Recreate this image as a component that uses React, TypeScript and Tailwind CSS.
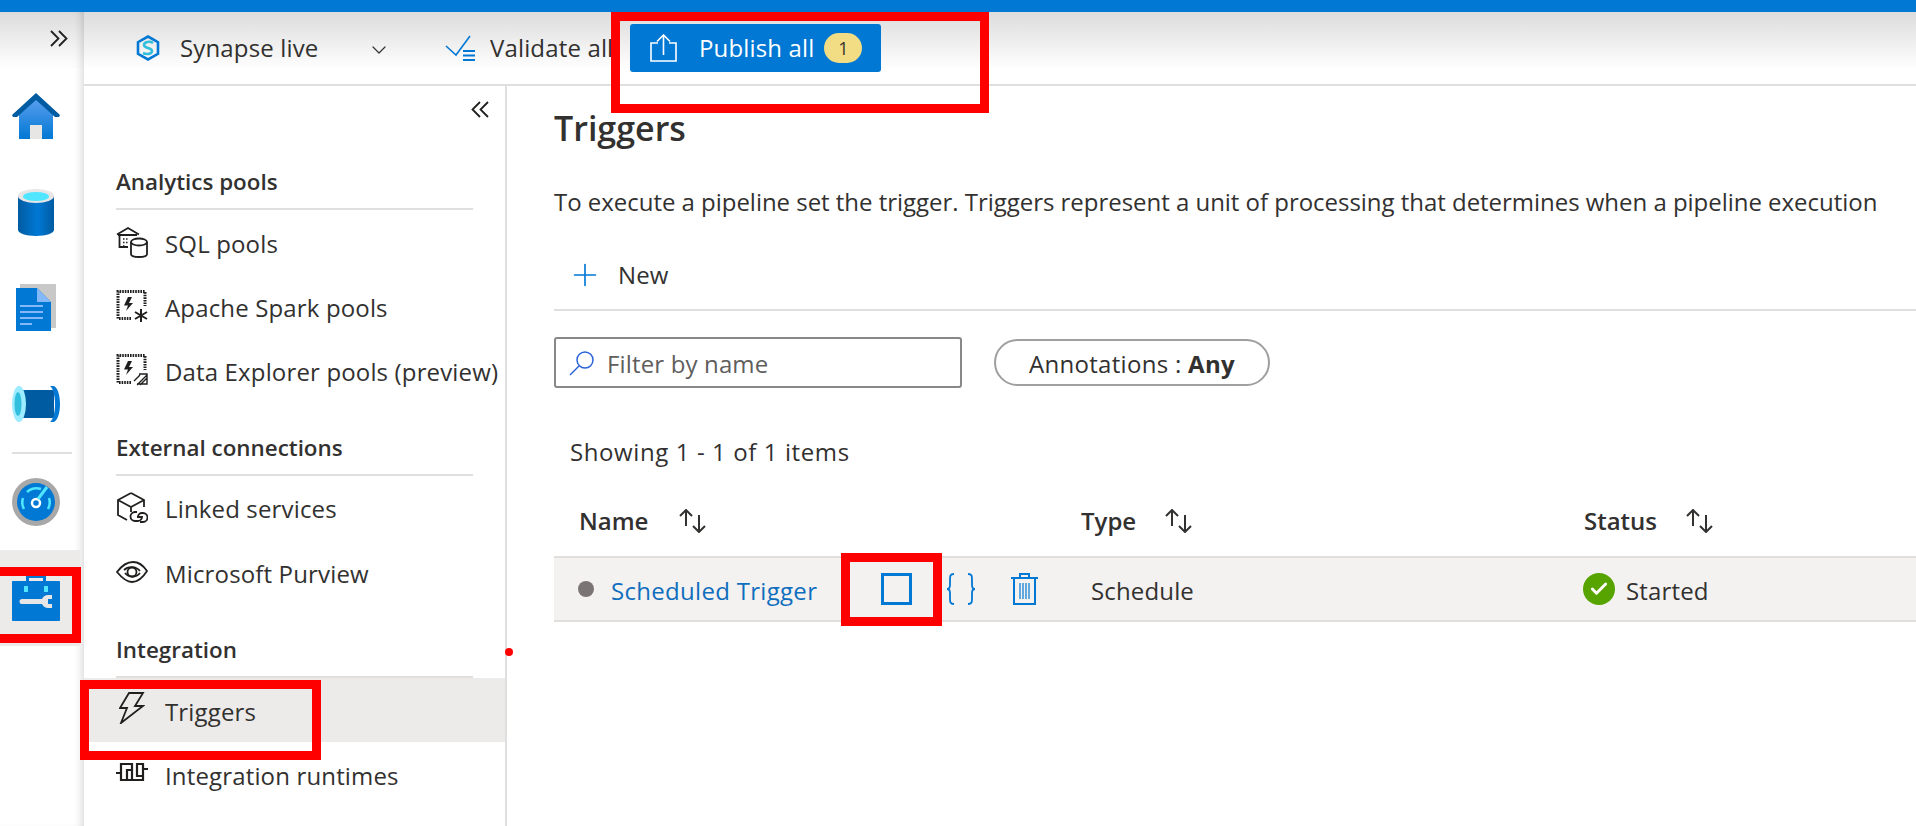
import { Check, ChevronDown, Plus } from 'lucide-react';

const font = { fontFamily: '"Open Sans", "Noto Sans", sans-serif' };

function SortIcon() {
  return (
    <svg width="30" height="24" viewBox="0 0 30 24" fill="none" stroke="#323130" strokeWidth="2">
      <path d="M8 17V1M2 7l6-6 6 6" />
      <path d="M21 6v17M15 17l6 6 6-6" />
    </svg>
  );
}

function HomeIcon() {
  return (
    <svg width="48" height="46" viewBox="0 0 48 46">
      <defs>
        <linearGradient id="home" x1="0" y1="0" x2="0" y2="1">
          <stop offset="0" stopColor="#5ea0ef" />
          <stop offset="1" stopColor="#0078d4" />
        </linearGradient>
      </defs>
      <path d="M7 20L24 4l17 16v26H7z" fill="url(#home)" />
      <path d="M0 22L24 0l24 22-1 2H43L24 7 5 24H1z" fill="#005ba1" />
      <rect x="18" y="32" width="12" height="14" fill="#e8e6e4" />
    </svg>
  );
}

function DatabaseIcon() {
  return (
    <svg width="36" height="48" viewBox="0 0 36 48">
      <defs>
        <linearGradient id="db" x1="0" y1="0" x2="1" y2="0">
          <stop offset="0" stopColor="#005ba1" />
          <stop offset="0.55" stopColor="#0078d4" />
          <stop offset="1" stopColor="#005ba1" />
        </linearGradient>
      </defs>
      <path d="M0 8v34c0 3 8 6 18 6s18-3 18-6V8z" fill="url(#db)" />
      <ellipse cx="18" cy="8" rx="18" ry="7" fill="#e6e6e6" />
      <ellipse cx="18" cy="8.500" rx="13" ry="4.500" fill="#50e6ff" />
    </svg>
  );
}

function DocumentIcon() {
  return (
    <svg width="42" height="48" viewBox="0 0 42 48">
      <path d="M5 0h36v44H5z" fill="#c8c8c8" />
      <path d="M1 4h21l14 14v29H1z" fill="#0078d4" />
      <path d="M22 4l14 14H22z" fill="#83b9f9" />
      <path d="M5 22h23M5 28h23M5 34h23M5 40h12" stroke="#83b9f9" strokeWidth="2" />
    </svg>
  );
}

function PipelineIcon() {
  return (
    <svg width="48" height="36" viewBox="0 0 48 36">
      <rect x="6" y="4" width="36" height="28" fill="#005ba1" />
      <path d="M38 0h3c4 0 7 8 7 18s-3 18-7 18h-3c3-2 5-9 5-18S41 2 38 0z" fill="#0078d4" />
      <ellipse cx="7" cy="18" rx="7" ry="18" fill="#9cebff" />
      <ellipse cx="6" cy="18" rx="3.500" ry="12" fill="#32bedd" />
    </svg>
  );
}

function MonitorIcon() {
  return (
    <svg width="48" height="48" viewBox="0 0 48 48" fill="none">
      <circle cx="24" cy="24" r="24" fill="#a8a8a8" />
      <circle cx="24" cy="24" r="19" fill="#0078d4" />
      <path d="M12 31a14 14 0 0 1-1-11" stroke="#50e6ff" strokeWidth="2.500" />
      <path d="M37 20a14 14 0 0 1-1 11" stroke="#50e6ff" strokeWidth="2.500" />
      <path d="M15 14a14 14 0 0 1 14-3" stroke="#50e6ff" strokeWidth="2.500" />
      <circle cx="24" cy="25" r="4" stroke="#fff" strokeWidth="2.500" />
      <path d="M26 21l9-12" stroke="#50e6ff" strokeWidth="3" />
    </svg>
  );
}

function ToolboxIcon() {
  return (
    <svg width="48" height="48" viewBox="0 0 48 48">
      <path d="M14 7V1h20v6h-3V4H17v3z" fill="#0078d4" />
      <rect x="0" y="7" width="48" height="40" rx="1" fill="#0078d4" />
      <rect x="12" y="12" width="4" height="6" fill="#50e6ff" />
      <rect x="32" y="12" width="4" height="6" fill="#50e6ff" />
      <path d="M10 25h20a7 7 0 0 1 7-4h3v4h-4v5h4v4h-3a7 7 0 0 1-7-4H10a2.500 2.500 0 0 1 0-5z" fill="#e6e6e6" />
    </svg>
  );
}

function SynapseLogo() {
  return (
    <svg width="24" height="26" viewBox="0 0 24 26" fill="none">
      <path d="M12 1.500l10 5.700v11.600l-10 5.700-10-5.700V7.200z" stroke="#0078d4" strokeWidth="2.600" />
      <path d="M17 8c-3-2-9-1.500-9 2s8 2.500 8 6-6 3.500-9 2" stroke="#32bedd" strokeWidth="2.600" />
    </svg>
  );
}

function ValidateIcon() {
  return (
    <svg width="30" height="26" viewBox="0 0 30 26" fill="none" stroke="#0078d4">
      <path d="M1 11l10 9L25 1" strokeWidth="1.600" />
      <path d="M18 16h12M18 20.500h12M18 25h12" strokeWidth="2" />
    </svg>
  );
}

function PublishIcon() {
  return (
    <svg width="27" height="28" viewBox="0 0 27 28" fill="none" stroke="#fff" strokeWidth="1.600">
      <path d="M8 9H1v18h25V9h-7" />
      <path d="M13.500 21V1M7 7.500L13.500 1 20 7.500" />
    </svg>
  );
}

function DoubleChevron({ flip }: { flip?: boolean }) {
  return (
    <svg width="18" height="17" viewBox="0 0 18 17" fill="none" stroke="#201f1e" strokeWidth="1.800" className={flip ? 'rotate-180' : ''}>
      <path d="M1 1l7.500 7.500L1 16M9 1l7.500 7.500L9 16" />
    </svg>
  );
}

function SqlPoolsIcon() {
  return (
    <svg width="32" height="32" viewBox="0 0 32 32" fill="none" stroke="#201f1e" strokeWidth="1.800">
      <path d="M1 8.500L12 2l11 6.500M2 9h19M3.500 9v12H12" />
      <path d="M7 13h5M7 16.500h5M7 20h2" strokeWidth="1.500" strokeDasharray="1.500 1.500" />
      <ellipse cx="23" cy="16" rx="8" ry="3.500" fill="#fff" />
      <path d="M15 16v12c0 2 3.500 3 8 3s8-1 8-3V16" />
    </svg>
  );
}

function PoolChip({ variant }: { variant: 'spark' | 'explorer' }) {
  return (
    <svg width="32" height="32" viewBox="0 0 32 32" fill="none" stroke="#201f1e">
      <path d="M15 28.500H2V1.500h27V16" strokeWidth="3" strokeDasharray="1.600 1" />
      <path d="M12 7l-4 8.500h4L10 21l7-8h-4l3-6z" fill="#201f1e" stroke="none" />
      {variant === 'spark' ? (
        <path d="M25 19v13M19 22l12 7M31 22l-12 7" strokeWidth="2" />
      ) : (
        <path d="M23 20h8v10H21M31 21L21 31M18 27l6-6M24 31l7-7" strokeWidth="1.400" />
      )}
    </svg>
  );
}

function LinkedIcon() {
  return (
    <svg width="32" height="32" viewBox="0 0 32 32" fill="none" stroke="#201f1e" strokeWidth="1.800">
      <path d="M15 1L2 8v15l9 5M15 1l13 7v7M2 8l13 7 13-7M15 15v5" />
      <path d="M21 20h-2a4.500 4.500 0 0 0 0 9h3a4.500 4.500 0 0 0 4-4h-5" />
      <path d="M22 25a4 4 0 0 1 4-4h1a4.500 4.500 0 0 1 0 9h-3" />
    </svg>
  );
}

function PurviewIcon() {
  return (
    <svg width="32" height="22" viewBox="0 0 32 22" fill="none" stroke="#201f1e" strokeWidth="1.800">
      <path d="M1 11C7 3 12 1 17 1c5 0 10 3 14 9-5 8-10 11-15 11S6 17 1 11z" />
      <path d="M8 9c4-4 12-4 16 1M24 12c-4 5-11 5-15 0" />
      <circle cx="16" cy="11" r="4.500" />
    </svg>
  );
}

function BoltIcon() {
  return (
    <svg width="26" height="32" viewBox="0 0 26 32" fill="none" stroke="#201f1e" strokeWidth="1.800">
      <path d="M10 1h14l-8 13h8L2 31l6-15H1z" strokeLinejoin="miter" />
    </svg>
  );
}

function RuntimeIcon() {
  return (
    <svg width="32" height="20" viewBox="0 0 32 20" fill="none" stroke="#201f1e" strokeWidth="2.200">
      <path d="M0 11h5M27 7h5" />
      <path d="M5 18V2h11v16zM11 18V8h6M16 18h11V2h-6v12h6" />
    </svg>
  );
}

function BracesIcon() {
  return (
    <svg width="28" height="32" viewBox="0 0 28 32" fill="none" stroke="#0078d4" strokeWidth="1.800">
      <path d="M7 1C3 1 3 3 3 7v5c0 3-1 4-3 4 2 0 3 1 3 4v5c0 4 0 6 4 6" />
      <path d="M21 1c4 0 4 2 4 6v5c0 3 1 4 3 4-2 0-3 1-3 4v5c0 4 0 6-4 6" />
    </svg>
  );
}

function TrashIcon() {
  return (
    <svg width="27" height="32" viewBox="0 0 27 32" fill="none" stroke="#0078d4" strokeWidth="2">
      <path d="M0 5h27M9 5V1h9v4M3 5v26h21V5" />
      <path d="M9 10v16M12 10v16M15 10v16M18 10v16" strokeWidth="1.200" />
    </svg>
  );
}

function AnnotationBox({ className }: { className: string }) {
  return <div className={`absolute border-[9px] border-[#ff0000] pointer-events-none ${className}`} />;
}

function SectionTitle({ children }: { children: string }) {
  return (
    <div className="mx-8 h-[53px] border-b-2 border-[#e1dfdd] text-[22.400px] font-semibold text-[#323130] leading-[50px]">
      {children}
    </div>
  );
}

function NavItem({ icon, label, active, textClass }: { icon: React.ReactNode; label: string; active?: boolean; textClass?: string }) {
  return (
    <div className={`h-16 flex items-center px-8 ${active ? 'bg-[#edebe9]' : ''}`}>
      <div className="w-8 mr-[17px] flex justify-center items-center -mt-1">{icon}</div>
      <span className={`text-[24px] tracking-[0.15px] text-[#323130] whitespace-nowrap ${textClass ?? ''}`}>{label}</span>
    </div>
  );
}

function RailItem({ children, active }: { children: React.ReactNode; active?: boolean }) {
  return (
    <div className={`h-24 flex items-center justify-center w-[80px] pr-2 ${active ? 'bg-[#edebe9]' : ''}`}>
      {children}
    </div>
  );
}

export default function App() {
  return (
    <div style={font} className="relative w-[1916px] h-[826px] overflow-hidden bg-white text-[#323130]">
      <div className="h-3 bg-[#0078d4]" />
      <div className="flex h-[814px]">
        {/* icon rail */}
        <div className="w-[84px] shrink-0 shadow-[inset_-8px_0_8px_-6px_rgba(0,0,0,0.16)]">
          <div className="h-14 bg-gradient-to-b from-[#dcdcdc] to-white flex justify-end items-start pr-4 pt-[18px] shadow-[inset_-8px_0_8px_-6px_rgba(0,0,0,0.16)]">
            <DoubleChevron />
          </div>
          <RailItem><HomeIcon /></RailItem>
          <RailItem><DatabaseIcon /></RailItem>
          <RailItem><DocumentIcon /></RailItem>
          <RailItem><PipelineIcon /></RailItem>
          <div className="mx-3 h-0.5 bg-[#e1dfdd]" />
          <RailItem><MonitorIcon /></RailItem>
          <RailItem active><ToolboxIcon /></RailItem>
        </div>

        <div className="flex-1 min-w-0">
          {/* toolbar */}
          <div className="h-[74px] border-b-2 border-[#e1dfdd] bg-gradient-to-b from-[#dcdcdc] via-[#ffffff] via-[80%] to-white flex items-start pt-3">
            <div className="h-12 flex items-center ml-[52px]">
              <SynapseLogo />
              <span className="ml-[20px] text-[24px] tracking-[0.15px] w-[187px] whitespace-nowrap">Synapse live</span>
              <ChevronDown size={24} strokeWidth={1.2} color="#323130" className="mt-1" />
            </div>
            <div className="h-12 flex items-center ml-[54px]">
              <ValidateIcon />
              <span className="ml-[15px] text-[24px] tracking-[0.15px] w-[125px] whitespace-nowrap overflow-hidden">Validate all</span>
            </div>
            <div className="h-12 w-[251px] bg-[#0078d4] rounded-[3px] flex items-center pl-5 ml-[15px] text-white">
              <PublishIcon />
              <span className="ml-[22px] text-[24px] tracking-[0.15px]">Publish all</span>
              <span className="ml-[10px] w-[38px] h-[30px] rounded-full bg-[#f2dd84] text-[#323130] text-[18px] flex items-center justify-center">1</span>
            </div>
          </div>

          <div className="flex h-[740px]">
            {/* side panel */}
            <div className="w-[423px] shrink-0 border-r-2 border-[#e1dfdd]">
              <div className="h-[71px] flex justify-end pr-[16px] pt-[15px]">
                <DoubleChevron flip />
              </div>
              <SectionTitle>Analytics pools</SectionTitle>
              <div className="mt-0.5">
                <NavItem icon={<SqlPoolsIcon />} label="SQL pools" />
                <NavItem icon={<PoolChip variant="spark" />} label="Apache Spark pools" />
                <NavItem icon={<PoolChip variant="explorer" />} label="Data Explorer pools (preview)" />
              </div>
              <div className="mt-[19px]">
                <SectionTitle>External connections</SectionTitle>
              </div>
              <div className="mt-0.5">
                <NavItem icon={<LinkedIcon />} label="Linked services" textClass="-mt-[2px]" />
                <NavItem icon={<PurviewIcon />} label="Microsoft Purview" />
              </div>
              <div className="mt-[19px]">
                <SectionTitle>Integration</SectionTitle>
              </div>
              <NavItem active icon={<BoltIcon />} label="Triggers" textClass="mt-[4px]" />
              <NavItem icon={<RuntimeIcon />} label="Integration runtimes" textClass="mt-[4px]" />
            </div>

            {/* triggers page */}
            <div className="flex-1 min-w-0 pl-[47px] overflow-hidden">
              <h2 className="mt-[20px] text-[34px] leading-[44px] font-semibold text-[#323130]">Triggers</h2>
              <p className="mt-9 text-[24px] leading-8 tracking-[-0.03px] whitespace-nowrap">
                To execute a pipeline set the trigger. Triggers represent a unit of processing that determines when a pipeline execution
              </p>
              <div className="mt-[28px] h-[65px] border-b-2 border-[#e1dfdd] flex items-center pl-4 pb-[5px]">
                <Plus size={36} strokeWidth={1.1} color="#0078d4" className="-ml-[3px]" />
                <span className="ml-[15px] text-[24px] tracking-[0.15px]">New</span>
              </div>
              <div className="mt-[26px] flex items-center gap-8">
                <div className="w-[408px] h-[51px] border-2 border-[#8a8886] rounded-[3px] flex items-center pl-[13px]">
                  <svg width="26" height="26" viewBox="0 0 26 26" fill="none" stroke="#2b63d9" strokeWidth="1.500">
                    <circle cx="16" cy="10" r="8" />
                    <path d="M10 16L1 25" />
                  </svg>
                  <span className="ml-[12px] mt-[3px] text-[24px] tracking-[0.15px] text-[#605e5c]">Filter by name</span>
                </div>
                <div className="w-[276px] h-[47px] border-2 border-[#a19f9d] rounded-full flex items-center justify-center text-[24px] tracking-[0.3px] pt-[2px]">
                  Annotations :&nbsp;<span className="font-bold">Any</span>
                </div>
              </div>
              <div className="mt-12 pl-4 text-[24px] leading-8 tracking-[0.6px]">Showing 1 - 1 of 1 items</div>
              <div className="h-[88px] pt-[37px] pl-[25px] grid grid-cols-[502px_503px_1fr] font-semibold text-[24px]">
                <div className="flex items-center h-8 gap-[30px]">Name <SortIcon /></div>
                <div className="flex items-center h-8 gap-[28px]">Type <SortIcon /></div>
                <div className="flex items-center h-8 gap-[28px]">Status <SortIcon /></div>
              </div>
              <div className="h-[66px] border-y-2 border-[#e1dfdd] bg-[#f3f2f1] pl-6 grid grid-cols-[503px_503px_1fr] items-center text-[24px] tracking-[0.15px]">
                <div className="flex items-center">
                  <span className="w-4 h-4 rounded-full bg-[#7a7574]" />
                  <span className="ml-[17px] w-[270px] mt-[3px] text-[#106ebe] tracking-[0.3px] whitespace-nowrap">Scheduled Trigger</span>
                  <span className="w-[31px] h-8 shrink-0 border-[3px] border-[#0078d4]" />
                  <span className="ml-[35px] shrink-0"><BracesIcon /></span>
                  <span className="ml-9 shrink-0"><TrashIcon /></span>
                </div>
                <div className="pl-[10px] mt-[3px]">Schedule</div>
                <div className="flex items-center -ml-[1px]">
                  <span className="w-8 h-8 rounded-full bg-[#57a300] flex items-center justify-center">
                    <Check size={20} strokeWidth={3.500} color="#fff" />
                  </span>
                  <span className="ml-[11px] mt-[3px]">Started</span>
                </div>
              </div>
            </div>
          </div>
        </div>
      </div>

      {/* red annotations drawn over the screenshot */}
      <AnnotationBox className="left-[611px] top-3 w-[378px] h-[101px]" />
      <AnnotationBox className="left-[-9px] top-[567px] w-[90px] h-[76px]" />
      <AnnotationBox className="left-20 top-[680px] w-[241px] h-20" />
      <AnnotationBox className="left-[841px] top-[553px] w-[101px] h-[73px]" />
      <div className="absolute left-[505px] top-[648px] w-2 h-2 rounded-full bg-[#ff0000]" />
    </div>
  );
}
